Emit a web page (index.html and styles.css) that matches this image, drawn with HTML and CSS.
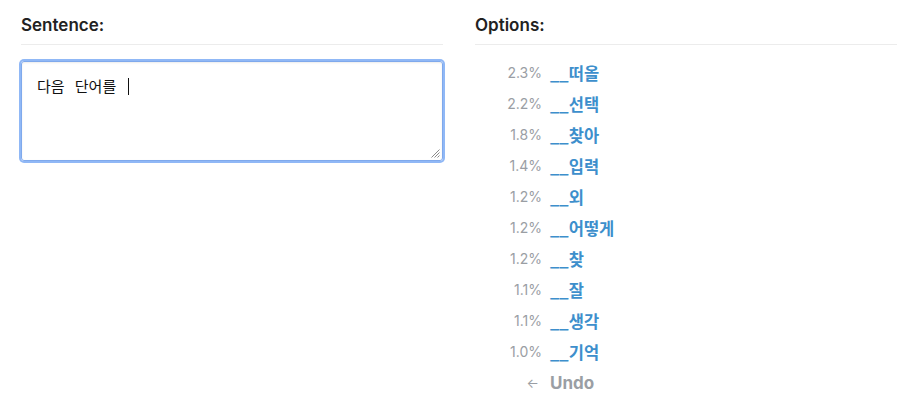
FILE: index.html
```html
<!DOCTYPE html>
<html lang="ko">
<head>
<meta charset="utf-8">
<title>Sentence options</title>
<link rel="stylesheet" href="styles.css">
</head>
<body>
<main class="page">
  <section class="col">
    <h2 class="heading">Sentence:</h2>
    <div class="textbox">
      <span class="typed">다음 단어를 </span><span class="caret"></span>
      <svg class="grip" width="10" height="10" viewBox="0 0 10 10" aria-hidden="true">
        <path d="M9.5 1.5 L1.5 9.5 M9.5 4.5 L4.5 9.5 M9.5 7.5 L7.5 9.5" stroke="#8a8a8a" stroke-width="1" fill="none"/>
      </svg>
    </div>
  </section>
  <section class="col">
    <h2 class="heading">Options:</h2>
    <ul class="options">
      <li class="opt"><span class="pct">2.3%</span><span class="word">__떠올</span></li>
      <li class="opt"><span class="pct">2.2%</span><span class="word">__선택</span></li>
      <li class="opt"><span class="pct">1.8%</span><span class="word">__찾아</span></li>
      <li class="opt"><span class="pct">1.4%</span><span class="word">__입력</span></li>
      <li class="opt"><span class="pct">1.2%</span><span class="word">__외</span></li>
      <li class="opt"><span class="pct">1.2%</span><span class="word">__어떻게</span></li>
      <li class="opt"><span class="pct">1.2%</span><span class="word">__찾</span></li>
      <li class="opt"><span class="pct">1.1%</span><span class="word">__잘</span></li>
      <li class="opt"><span class="pct">1.1%</span><span class="word">__생각</span></li>
      <li class="opt"><span class="pct">1.0%</span><span class="word">__기억</span></li>
      <li class="opt undo"><span class="pct arrow">←</span><span class="word">Undo</span></li>
    </ul>
  </section>
</main>
</body>
</html>
```

FILE: styles.css
```css
html, body {
  margin: 0;
  padding: 0;
  background: #ffffff;
}

body {
  font-family: Inter, "Liberation Sans", Arial, "Noto Sans CJK KR", sans-serif;
  color: #222;
}

.page {
  display: grid;
  grid-template-columns: 422px 422px;
  column-gap: 32px;
  padding: 15px 0 0 21px;
}

.heading {
  margin: 0;
  font-size: 17px;
  line-height: 20px;
  font-weight: 600;
  color: #222;
  padding-bottom: 9px;
  border-bottom: 1px solid #ececec;
}

.textbox {
  position: relative;
  margin-top: 16px;
  height: 100px;
  box-sizing: border-box;
  border: 1px solid #7fa9ec;
  border-radius: 3px;
  box-shadow: 0 0 0 2px #90b8f6, inset 0 1px 2px rgba(0,0,0,0.08);
  padding: 14px 15px 0 15px;
  font-family: "Noto Sans CJK KR", sans-serif;
  font-size: 15px;
  font-weight: 400;
  line-height: 20px;
  color: #111;
}

.typed {
  white-space: pre;
  word-spacing: 6px;
}

.caret {
  display: inline-block;
  width: 1px;
  height: 17px;
  background: #111;
  vertical-align: -3px;
  margin-left: 2px;
}

.grip {
  position: absolute;
  right: 2px;
  bottom: 2px;
}

.options {
  list-style: none;
  margin: 0;
  padding: 12px 0 0 0;
}

.opt {
  display: flex;
  align-items: center;
  column-gap: 8px;
  height: 31px;
}

.pct {
  width: 67px;
  text-align: right;
  font-family: Inter, "Liberation Sans", Arial, sans-serif;
  font-size: 14px;
  color: #9a9ea4;
}

.word {
  font-family: "Noto Sans CJK KR", sans-serif;
  font-weight: bold;
  font-size: 16.5px;
  color: #3d8fcc;
}

.undo .arrow {
  font-size: 13px;
  padding-right: 3px;
  box-sizing: border-box;
}

.undo .word {
  font-family: Inter, "Liberation Sans", Arial, sans-serif;
  color: #9a9ea4;
  font-size: 17px;
  font-weight: 700;
}
```
